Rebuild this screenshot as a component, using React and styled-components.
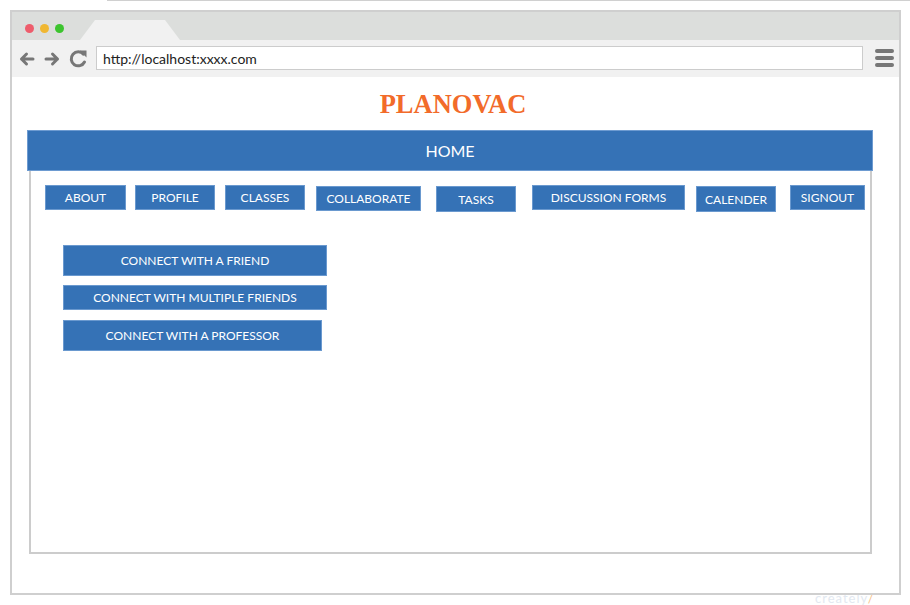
import React from "react";
import styled, { createGlobalStyle } from "styled-components";

const Global = createGlobalStyle`
  html, body { margin: 0; padding: 0; background: #ffffff; overflow: hidden; }
  body { width: 910px; height: 605px; font-family: Lato, "Open Sans", sans-serif; }
  * { box-sizing: border-box; }
`;

const Page = styled.div`
  position: relative;
  width: 910px;
  height: 605px;
`;

const TopLine = styled.div`
  margin-left: 107px;
  height: 1px;
  background: #d0d0d0;
`;

const Window = styled.div`
  margin: 9px 0 0 10px;
  width: 891px;
  height: 585px;
  border: 2px solid #cfcfcf;
  background: #ffffff;
  display: flex;
  flex-direction: column;
  position: relative;
  z-index: 1;
`;

const TitleBar = styled.div`
  height: 28px;
  background: #dcdedc;
  display: flex;
  align-items: flex-end;
  padding-left: 13px;
`;

const Dots = styled.div`
  display: flex;
  gap: 6px;
  margin-bottom: 7px;
`;

const Dot = styled.span`
  width: 9px;
  height: 9px;
  border-radius: 50%;
  background: ${(p) => p.$c};
`;

const Tab = styled.div`
  margin-left: 16px;
  width: 100px;
  height: 20px;
  background: #f1f1f1;
  clip-path: polygon(15px 0, 85px 0, 100px 100%, 0 100%);
`;

const Toolbar = styled.div`
  height: 37px;
  background: #f1f1f1;
  display: flex;
  align-items: center;
  padding: 0 5px 0 4px;
`;

const Address = styled.div`
  margin-left: 3px;
  flex: 1;
  height: 24px;
  margin-top: -1px;
  background: #ffffff;
  border: 1px solid #cccccc;
  display: flex;
  align-items: center;
  padding-left: 6px;
  font-family: Lato, sans-serif;
  font-size: 14px;
  color: #222222;
`;

const Burger = styled.div`
  margin-left: 12px;
  width: 19px;
  display: flex;
  flex-direction: column;
  gap: 3px;
  margin-top: -2px;
`;

const Bar = styled.span`
  display: block;
  height: 4px;
  border-radius: 2px;
  background: #777777;
`;

const Main = styled.div`
  flex: 1;
  display: flex;
  flex-direction: column;
  padding: 12px 0 0 15px;
`;

const Title = styled.h1`
  margin: 0 0 11px 0;
  padding-left: 6px;
  height: 30px;
  line-height: 30px;
  text-align: center;
  font-family: "Liberation Serif", "Times New Roman", serif;
  font-weight: bold;
  font-size: 26.5px;
  color: #f26b2a;
  width: 846px;
`;

const HomeBar = styled.div`
  width: 846px;
  height: 41px;
  background: #3572b6;
  border: 1px solid #6d9bd1;
  display: flex;
  align-items: center;
  justify-content: center;
  color: #ffffff;
  font-family: Lato, sans-serif;
  font-size: 16px;
`;

const ContentBox = styled.div`
  margin-left: 2px;
  width: 843px;
  height: 383px;
  border: 2px solid #cccccc;
  border-top: none;
  padding: 14px 0 0 14px;
  display: flex;
  flex-direction: column;
`;

const NavRow = styled.div`
  display: flex;
  align-items: flex-start;
`;

const Btn = styled.div`
  background: #3572b6;
  border: 1px solid #6a99cf;
  color: #ffffff;
  font-family: Lato, sans-serif;
  font-size: 12px;
  display: flex;
  align-items: center;
  justify-content: center;
  white-space: nowrap;
`;

const NavBtn = styled(Btn)`
  width: ${(p) => p.$w}px;
  height: ${(p) => p.$h || 25}px;
  margin-left: ${(p) => p.$gap || 0}px;
  margin-top: ${(p) => p.$dy || 0}px;
`;

const ConnectList = styled.div`
  margin: 33px 0 0 18px;
  display: flex;
  flex-direction: column;
`;

const ConnectBtn = styled(Btn)`
  width: ${(p) => p.$w}px;
  height: ${(p) => p.$h}px;
  margin-top: ${(p) => p.$gap || 0}px;
`;

const Watermark = styled.div`
  position: absolute;
  left: 815px;
  top: 590px;
  font-family: Lato, sans-serif;
  font-size: 13px;
  color: #e2e8f0;
  z-index: 0;
  letter-spacing: 1px;
`;

const Slash = styled.span`
  color: #f8c48c;
`;

const navItems = [
  { label: "ABOUT", w: 81, gap: 0 },
  { label: "PROFILE", w: 80, gap: 9 },
  { label: "CLASSES", w: 80, gap: 10 },
  { label: "COLLABORATE", w: 105, gap: 11, dy: 1 },
  { label: "TASKS", w: 80, gap: 15, dy: 1, h: 26 },
  { label: "DISCUSSION FORMS", w: 153, gap: 16 },
  { label: "CALENDER", w: 80, gap: 11, dy: 1, h: 26 },
  { label: "SIGNOUT", w: 75, gap: 14 },
];

const connects = [
  { label: "CONNECT WITH A FRIEND", w: 264, h: 31, gap: 0 },
  { label: "CONNECT WITH MULTIPLE FRIENDS", w: 264, h: 25, gap: 9 },
  { label: "CONNECT WITH A PROFESSOR", w: 259, h: 31, gap: 10 },
];

function NavIcons() {
  return (
    <svg width="75" height="24" viewBox="0 0 75 24" style={{ marginLeft: 2 }}>
      <g stroke="#777" strokeWidth="3" fill="none" strokeLinecap="round" strokeLinejoin="round">
        <path d="M15 12 H3.5 M8.5 7 L3.5 12 L8.5 17" />
        <path d="M28 12 H39.5 M34.5 7 L39.5 12 L34.5 17" />
        <path d="M65.5 7.2 A7 7 0 1 0 66.5 15" />
      </g>
      <path d="M61.5 3.5 L68.5 3.5 L68.5 10.5 Z" fill="#777" />
    </svg>
  );
}

export default function App() {
  return (
    <Page>
      <Global />
      <TopLine />
      <Window>
        <TitleBar>
          <Dots>
            <Dot $c="#ee5d6c" />
            <Dot $c="#f0b731" />
            <Dot $c="#3cc42e" />
          </Dots>
          <Tab />
        </TitleBar>
        <Toolbar>
          <NavIcons />
          <Address>http://localhost:xxxx.com</Address>
          <Burger>
            <Bar />
            <Bar />
            <Bar />
          </Burger>
        </Toolbar>
        <Main>
          <Title>PLANOVAC</Title>
          <HomeBar>HOME</HomeBar>
          <ContentBox>
            <NavRow>
              {navItems.map((n) => (
                <NavBtn key={n.label} $w={n.w} $gap={n.gap} $dy={n.dy} $h={n.h}>
                  {n.label}
                </NavBtn>
              ))}
            </NavRow>
            <ConnectList>
              {connects.map((c) => (
                <ConnectBtn key={c.label} $w={c.w} $h={c.h} $gap={c.gap}>
                  {c.label}
                </ConnectBtn>
              ))}
            </ConnectList>
          </ContentBox>
        </Main>
      </Window>
      <Watermark>
        creately<Slash>/</Slash>
      </Watermark>
    </Page>
  );
}
